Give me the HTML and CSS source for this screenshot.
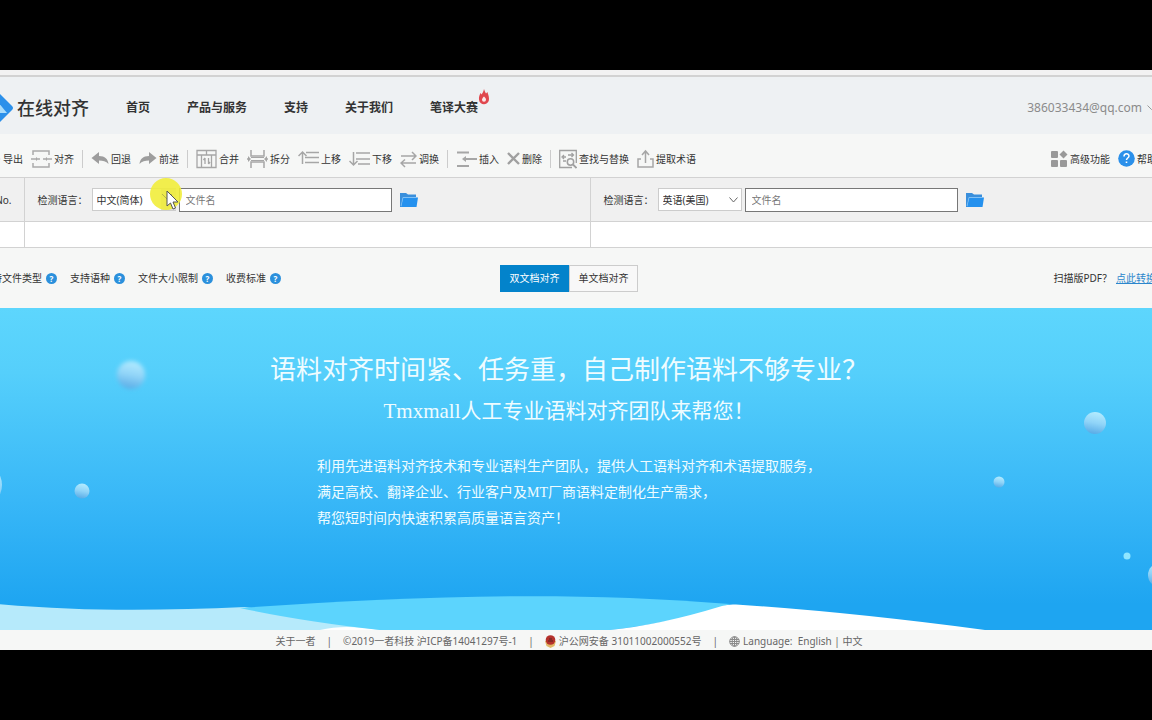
FILE: index.html
```html
<!DOCTYPE html>
<html lang="zh-CN">
<head>
<meta charset="utf-8">
<title>在线对齐</title>
<link rel="stylesheet" href="styles.css">
</head>
<body>
<div class="stage">
<div class="app">
  <header class="header">
    <a class="brand" href="#">
      <svg class="brand-mark" width="42" height="42" viewBox="0 0 42 42"><path d="M21 1 39 19q2 2 0 4L21 41 3 23q-2-2 0-4z" fill="#2b90ea"/><path d="m21 10 13 16H8z" fill="#a9dcfb"/><path d="m20 18 5 8H14z" fill="#2b90ea"/></svg>
      <span>在线对齐</span>
    </a>
    <nav class="nav">
      <a href="#">首页</a>
      <a href="#">产品与服务</a>
      <a href="#">支持</a>
      <a href="#">关于我们</a>
      <a class="hot" href="#">笔译大赛<svg class="flame" width="12" height="16" viewBox="0 0 12 16"><path d="M6 0c.6 2 1.200 3 2 4.500L9.500 3c.3 2 1.500 3.500 1.500 7a5 5 0 0 1-10 .5C.7 8 1.600 6 2.500 4l1.200 1.500C4.500 4 5.500 2.500 6 0z" fill="#e0474e"/><path d="M6 7.500c1.500 1.300 2 2.200 2 3.200a2 2 0 0 1-4 0c0-1 .8-2 2-3.200z" fill="#fbe9ea"/></svg></a>
    </nav>
    <button class="account" type="button">386033434@qq.com<svg width="9" height="6" viewBox="0 0 9 6"><path d="m.5.5 4 4 4-4" fill="none" stroke="#999"/></svg></button>
  </header>

  <div class="toolbar">
    <button type="button"><svg width="19" height="20" viewBox="0 0 19 20"><path d="M10 3H1v14h9M6 10h10M13 6l4 4-4 4" fill="none" stroke="#aaa" stroke-width="2"/></svg>导出</button>
    <button type="button"><svg width="21" height="20" viewBox="0 0 21 20"><path d="M2 6V2h16v4M2 14v4h16v-4M0 10h5M16 10h5M7 10h2M12 10h2" fill="none" stroke="#aaa" stroke-width="1.500"/><path d="m5 8 2.500 2L5 12zM16 8l-2.500 2 2.500 2z" fill="#aaa"/></svg>对齐</button>
    <i class="sep"></i>
    <button type="button"><svg width="18" height="20" viewBox="0 0 18 20"><path d="M8 3v4c6 0 9 3 9.500 8C15 12 12 11.500 8 11.500V15L.5 9z" fill="#9d9d9d"/></svg>回退</button>
    <button type="button"><svg width="18" height="20" viewBox="0 0 18 20"><path d="M10 3v4C4 7 1 10 .5 15 3 12 6 11.500 10 11.500V15l7.500-6z" fill="#9d9d9d"/></svg>前进</button>
    <i class="sep"></i>
    <button type="button"><svg width="21" height="20" viewBox="0 0 21 20"><path d="M1 1.500h19v17H1zM1 6h19M10.500 1v5M5.500 6v12M15.500 6v12M9 9v6M12.500 9v6M7.500 11 9 9M14 13l-1.500 2" fill="none" stroke="#a6a6a6" stroke-width="1.300"/></svg>合并</button>
    <button type="button"><svg width="21" height="20" viewBox="0 0 21 20"><path d="M4 1v6h13V1M4 19v-6h13v6M0 10h2M19 10h2" fill="none" stroke="#a6a6a6" stroke-width="1.500"/><path d="M4 8.500h13M4 11.500h13" stroke="#a6a6a6"/><path d="m1 7 3 3-3 3zM20 7l-3 3 3 3z" fill="#a6a6a6"/></svg>拆分</button>
    <button type="button"><svg width="21" height="20" viewBox="0 0 21 20"><path d="M4.500 15V3M.5 7l4-4 4 4M8 3.500h13M7 8.500h14M7 13.500h14" fill="none" stroke="#a6a6a6" stroke-width="1.500"/></svg>上移</button>
    <button type="button"><svg width="21" height="20" viewBox="0 0 21 20"><path d="M4.500 3v13M.5 12l4 4 4-4M7 4h14M7 10h14M9 15h12" fill="none" stroke="#a6a6a6" stroke-width="1.500"/></svg>下移</button>
    <button type="button"><svg width="17" height="20" viewBox="0 0 17 20"><path d="M1 7h15M12 3l4 4-4 4M16 14H1M5 10.500 1 14l4 4" fill="none" stroke="#a6a6a6" stroke-width="1.500"/></svg>调换</button>
    <i class="sep"></i>
    <button type="button"><svg width="21" height="20" viewBox="0 0 21 20"><path d="M1 3.500h12M1 17h12" stroke="#a6a6a6" stroke-width="2"/><path d="M8 10h13" stroke="#a6a6a6" stroke-width="2"/><path d="m6 10 4-3v6z" fill="#a6a6a6"/></svg>插入</button>
    <button type="button"><svg width="13" height="20" viewBox="0 0 13 20"><path d="m1 4 11 11M12 4 1 15" stroke="#a0a0a0" stroke-width="2.400"/></svg>删除</button>
    <i class="sep"></i>
    <button type="button"><svg width="18" height="20" viewBox="0 0 18 20"><path d="M17.300 14V1.500H.7v17H13" fill="none" stroke="#a0a0a0" stroke-width="1.300"/><path d="M4 8h3M9 6h5M12.500 4l2 2-2 2M5 10l-2-2 2-2M4 12h3" fill="none" stroke="#a0a0a0" stroke-width="1.300"/><circle cx="11.500" cy="13" r="3.200" fill="none" stroke="#a0a0a0" stroke-width="1.500"/><path d="m14 15.500 3.500 3.500" stroke="#a0a0a0" stroke-width="1.800"/></svg>查找与替换</button>
    <button type="button"><svg width="17" height="20" viewBox="0 0 17 20"><path d="M4 10H1v8h15v-8h-3M8.500 14V2M5 6l3.500-4L12 6" fill="none" stroke="#a6a6a6" stroke-width="1.500"/></svg>提取术语</button>
    <button class="push" type="button"><svg width="17" height="20" viewBox="0 0 17 20"><rect y="2" width="7" height="7" rx="1" fill="#999"/><rect y="11" width="7" height="7" rx="1" fill="#999"/><rect x="9" y="11" width="7" height="7" rx="1" fill="#999"/><path d="m12.500 1.500 4 4-4 4-4-4z" fill="#999"/></svg>高级功能</button>
    <button type="button"><svg width="17" height="20" viewBox="0 0 17 20"><circle cx="8.500" cy="9.500" r="8.300" fill="#2b90ea"/><path d="M6 7.500c0-3.500 5-3.500 5-.5 0 2-2.500 2-2.500 4" fill="none" stroke="#fff" stroke-width="1.500"/><path d="M7.700 12.500h1.600V14H7.700z" fill="#fff"/></svg>帮助</button>
  </div>

  <table class="sheet">
    <colgroup><col class="c-no"><col><col><col class="c-end"></colgroup>
    <thead>
      <tr>
        <th class="no">No.</th>
        <th>
          <div class="picker">
            <label for="srcLang">检测语言：</label>
            <span class="select-box">
              <select id="srcLang"><option>中文(简体)</option><option>英语(美国)</option></select>
              <span class="arrow-cell"></span>
              <svg class="pointer" width="36" height="38" viewBox="0 0 36 38"><circle cx="17" cy="17" r="16" fill="#f0ed35" opacity=".88"/><path d="m13 17 5 5 5-5" fill="none" stroke="#b8b54a"/><path d="M18 14v15l3.500-3 2.500 6 2.500-1-2.500-6h5z" fill="#fff" stroke="#555"/></svg>
            </span>
            <input type="text" placeholder="文件名" aria-label="原文文件名">
            <button class="folder" type="button" aria-label="选择文件"><svg width="18" height="16" viewBox="0 0 18 16"><path d="M0 1h6l2 1.500h8V5H3L1 15H0z" fill="#3a8fdc"/><path d="M3 5.500h15L16.500 15H1z" fill="#2591ee"/><path d="M1 14 3 5.500h14" fill="none" stroke="#7cc0f7" stroke-width=".7"/></svg></button>
          </div>
        </th>
        <th>
          <div class="picker">
            <label for="dstLang">检测语言：</label>
            <span class="select-box">
              <select id="dstLang"><option>英语(美国)</option><option>中文(简体)</option></select>
              <svg class="chevron" width="9" height="6" viewBox="0 0 9 6"><path d="m.5.5 4 4.500 4-4.500" fill="none" stroke="#666"/></svg>
            </span>
            <input type="text" placeholder="文件名" aria-label="译文文件名">
            <button class="folder" type="button" aria-label="选择文件"><svg width="18" height="16" viewBox="0 0 18 16"><path d="M0 1h6l2 1.500h8V5H3L1 15H0z" fill="#3a8fdc"/><path d="M3 5.500h15L16.500 15H1z" fill="#2591ee"/><path d="M1 14 3 5.500h14" fill="none" stroke="#7cc0f7" stroke-width=".7"/></svg></button>
          </div>
        </th>
        <th></th>
      </tr>
    </thead>
    <tbody><tr><td></td><td></td><td></td><td></td></tr></tbody>
  </table>

  <div class="options">
    <div class="tips">
      <span>支持文件类型</span><button type="button">?</button>
      <span>支持语种</span><button type="button">?</button>
      <span>文件大小限制</span><button type="button">?</button>
      <span>收费标准</span><button type="button">?</button>
    </div>
    <div class="modes">
      <button class="active" type="button">双文档对齐</button><button type="button">单文档对齐</button>
    </div>
    <div class="scan">扫描版PDF？<a href="#">点此转换</a></div>
  </div>

  <main class="hero">
    <svg class="scene" viewBox="-32 308 1202 322" preserveAspectRatio="none">
      <defs>
        <linearGradient id="ball" x1=".6" y1="0" x2=".4" y2="1"><stop offset="0" stop-color="#b4ecff"/><stop offset=".5" stop-color="#90d4f8"/><stop offset="1" stop-color="#58abe6"/></linearGradient>
        <filter id="soft" x="-30%" y="-30%" width="160%" height="160%"><feGaussianBlur stdDeviation="2"/></filter>
        <filter id="edge" x="-30%" y="-30%" width="160%" height="160%"><feGaussianBlur stdDeviation=".6"/></filter>
      </defs>
      <circle cx="131" cy="375" r="14" fill="url(#ball)" filter="url(#soft)"/>
      <g fill="url(#ball)" filter="url(#edge)">
        <circle cx="82" cy="491" r="7.500"/>
        <circle cx="1095" cy="423" r="11"/>
        <circle cx="999" cy="482" r="5.500"/>
        <circle cx="1160" cy="575" r="12"/>
        <circle cx="-20" cy="485" r="22"/>
      </g>
      <circle cx="1127" cy="556" r="3.500" fill="#8fe6ff"/>
      <path d="M-32 601C70 612 150 611 245 607L400 630H-32z" fill="#b6eafb"/>
      <path d="M320 630Q345 624 380 630z" fill="#fff"/>
      <path d="M240 608C400 597 560 590 730 604Q680 622 610 630H380Q300 621 240 608z" fill="#5cd4fd"/>
      <path d="M610 630Q660 625 722 606 728 604 736 604.500 850 612 985 630z" fill="#fff"/>
    </svg>
    <div class="pitch">
      <h1>语料对齐时间紧、任务重，自己制作语料不够专业？</h1>
      <h2>Tmxmall人工专业语料对齐团队来帮您！</h2>
      <p>利用先进语料对齐技术和专业语料生产团队，提供人工语料对齐和术语提取服务，<br>满足高校、翻译企业、行业客户及MT厂商语料定制化生产需求，<br>帮您短时间内快速积累高质量语言资产！</p>
    </div>
  </main>

  <footer class="footer">
    <a href="#">关于一者</a>
    <span>|</span>
    <span>©2019一者科技 沪ICP备14041297号-1</span>
    <span>|</span>
    <a class="with-icon" href="#"><svg width="11" height="13" viewBox="0 0 11 13"><path d="M0 6h11l-1.500 5L5.500 13l-4-2z" fill="#e2b868"/><circle cx="5.500" cy="5" r="4.800" fill="#b5312c"/><path d="M3 6h5M4 4h3" stroke="#5b2523"/></svg>沪公网安备 31011002000552号</a>
    <span>|</span>
    <span class="with-icon"><svg width="11" height="11" viewBox="0 0 11 11"><g fill="none" stroke="#8a8a8a"><circle cx="5.500" cy="5.500" r="4.800"/><ellipse cx="5.500" cy="5.500" rx="2.300" ry="4.800"/><path d="M5.500 1v9M1 3.500h9M.5 5.500h10M1 7.500h9"/></g></svg>Language:&nbsp;&nbsp;<a href="#">English</a>&nbsp;|&nbsp;<a href="#">中文</a></span>
  </footer>
</div>
</div>
</body>
</html>
```
FILE: styles.css
```css
* { box-sizing: border-box; }

body {
  margin: 0;
  background: #000;
  color: #333;
  font-family: "Noto Sans", "Noto Sans CJK SC", sans-serif;
  font-size: 10px;
  line-height: 16px;
}

button, input, select { font: inherit; color: inherit; }
button { border: 0; padding: 0; background: none; white-space: nowrap; }
a { color: inherit; text-decoration: none; }
svg { display: block; flex: none; }

.stage {
  min-height: 100vh;
  padding: 70px 0;
  overflow: hidden;
  display: flex;
  flex-direction: column;
}

.app {
  flex: 1;
  margin: 0 -18px 0 -32px;
  display: flex;
  flex-direction: column;
  background: #f6f7f6;
  border-top: 5px solid #f2f2f2;
}

.header {
  display: flex;
  align-items: center;
  height: 59px;
  padding: 4px 14px 0 5px;
  border-top: 2px solid #d2d2d2;
  background: #eef1f3;
}
.brand {
  display: flex;
  align-items: center;
  gap: 2px;
  font-size: 18px;
  font-weight: 500;
  line-height: 24px;
}
.nav {
  display: flex;
  gap: 37px;
  margin-left: 37px;
  font-size: 12px;
  font-weight: 700;
}
.hot { position: relative; }
.flame { position: absolute; right: -12px; top: -11px; }
.account {
  display: flex;
  align-items: center;
  gap: 5px;
  margin-left: auto;
  font-size: 12px;
  color: #8b8b8b;
}

.toolbar {
  display: flex;
  align-items: center;
  gap: 8px;
  height: 43px;
  padding: 6px 13px 0 14px;
}
.toolbar button { display: flex; align-items: center; gap: 2px; }
.sep { width: 1px; height: 18px; background: #ccc; }
.toolbar .push { margin-left: auto; }

.sheet {
  width: 100%;
  table-layout: fixed;
  border-collapse: collapse;
  border-bottom: 1px solid #d2d2d2;
}
.c-no { width: 56px; }
.c-end { width: 14px; }
.sheet th {
  height: 44px;
  padding: 0;
  border-top: 1px solid #d2d2d2;
  border-bottom: 1px solid #d2d2d2;
  background: #f0f0f0;
  font-weight: 400;
}
.sheet td { height: 26px; padding: 0; background: #fff; }
.sheet th + th, .sheet td + td { border-left: 1px solid #d2d2d2; }
.sheet th:last-child, .sheet td:last-child { border-left: 0; }
.sheet .no { padding-right: 12px; text-align: right; }

.picker { display: flex; align-items: center; padding-left: 13px; }
.picker label { margin-right: 4px; }
.select-box { position: relative; margin-right: 3px; }
.select-box select {
  display: block;
  width: 84px;
  height: 23px;
  padding: 0 4px;
  border: 1px solid #ccc;
  border-radius: 0;
  background: #fff;
  appearance: none;
}
.chevron { position: absolute; right: 4px; top: 9px; }
.arrow-cell { position: absolute; right: 0; top: 1px; width: 15px; height: 21px; background: #ddd; }
.pointer { position: absolute; right: -9px; top: -11px; z-index: 1; }
.picker input {
  width: 213px;
  height: 24px;
  padding: 0 6px;
  border: 1px solid #777;
  background: #fff;
}
.picker input::placeholder { color: #777; opacity: 1; }
.folder { margin-left: 8px; }

.options {
  display: grid;
  grid-template-columns: 1fr auto 1fr;
  align-items: center;
  height: 60px;
  padding: 0 14px;
}
.tips { display: flex; align-items: center; }
.tips button {
  width: 11px;
  height: 11px;
  margin: 0 13px 0 4px;
  border-radius: 50%;
  background: #2b90dc;
  color: #fff;
  font-size: 8px;
  font-weight: 700;
  line-height: 11px;
}
.modes { display: flex; }
.modes button {
  width: 69px;
  height: 27px;
  border: 1px solid #ccc;
  background: #f8f8f8;
}
.modes .active { border-color: #0383cb; background: #0383cb; color: #fff; }
.scan { justify-self: end; }
.scan a { margin-left: 4px; color: #2b86cc; text-decoration: underline; }

.hero {
  position: relative;
  flex: 1;
  background: linear-gradient(#5dd6fd 0%, #55cffb 20%, #38b7f7 60%, #1ea5f1 92%);
  color: #effcff;
}
.scene { position: absolute; inset: 0; width: 100%; height: 100%; }
.pitch {
  position: relative;
  display: flex;
  flex-direction: column;
  align-items: center;
  padding: 41px 0 98px;
}
.pitch h1, .pitch h2, .pitch p { margin: 0; font-weight: 400; }
.pitch h1 { font-size: 26px; line-height: 40px; }
.pitch h2, .pitch p { font-family: "Liberation Serif", "Noto Sans CJK SC", serif; }
.pitch h2 { font-size: 21px; line-height: 44px; }
.pitch p { margin-top: 21px; font-size: 14px; line-height: 26px; }

.footer {
  display: flex;
  justify-content: center;
  gap: 11px;
  height: 20px;
  padding-top: 3px;
  color: #666;
}
.footer > * { height: 16px; }
.with-icon { display: flex; align-items: center; }
.with-icon svg { margin-right: 3px; }
```
